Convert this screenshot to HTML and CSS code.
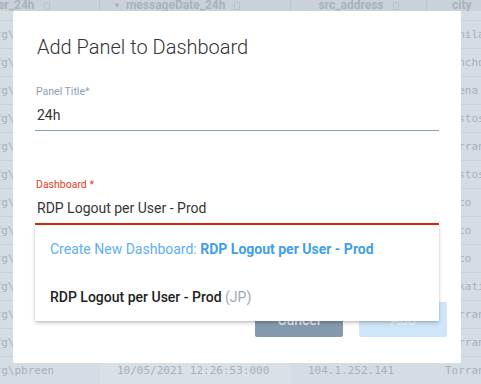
FILE: index.html
```html
<!DOCTYPE html>
<html>
<head>
    <link rel="stylesheet" href="styles.css">
    <meta name="viewport" content="width=device-width, initial-scale=1.0">
    <title>Add Panel</title>
</head>
<body>
    <div class="grid">
        <div class="grid-head">
            <div class="hcell c1"><span class="cut">user_24h</span><span class="clip"></span></div>
            <div class="hcell c2"><span class="sort">&#9660;</span>messageDate_24h<span class="clip"></span></div>
            <div class="hcell c3 center">src_address<span class="clip"></span></div>
            <div class="hcell c4">city<span class="clip"></span></div>
        </div>
        <div class="grid-gap"></div>
        <div class="row"><div class="cell c1"><span class="cut">org\pbreen</span></div><div class="cell c2">10/05/2021 12:31:02:000</div><div class="cell c3">104.1.252.141</div><div class="cell c4">Manila</div></div>
        <div class="row"><div class="cell c1"><span class="cut">org\pbreen</span></div><div class="cell c2">10/05/2021 12:30:47:000</div><div class="cell c3">104.1.252.141</div><div class="cell c4">Rancho</div></div>
        <div class="row"><div class="cell c1"><span class="cut">org\pbreen</span></div><div class="cell c2">10/05/2021 12:30:11:000</div><div class="cell c3">104.1.252.141</div><div class="cell c4">Arena</div></div>
        <div class="row"><div class="cell c1"><span class="cut">org\pbreen</span></div><div class="cell c2">10/05/2021 12:29:58:000</div><div class="cell c3">104.1.252.141</div><div class="cell c4">Pastos</div></div>
        <div class="row"><div class="cell c1"><span class="cut">org\pbreen</span></div><div class="cell c2">10/05/2021 12:29:40:000</div><div class="cell c3">104.1.252.141</div><div class="cell c4">Torrance</div></div>
        <div class="row"><div class="cell c1"><span class="cut">org\pbreen</span></div><div class="cell c2">10/05/2021 12:29:12:000</div><div class="cell c3">104.1.252.141</div><div class="cell c4">Pastos</div></div>
        <div class="row"><div class="cell c1"><span class="cut">org\pbreen</span></div><div class="cell c2">10/05/2021 12:28:50:000</div><div class="cell c3">104.1.252.141</div><div class="cell c4">Waco</div></div>
        <div class="row"><div class="cell c1"><span class="cut">org\pbreen</span></div><div class="cell c2">10/05/2021 12:28:31:000</div><div class="cell c3">104.1.252.141</div><div class="cell c4">Waco</div></div>
        <div class="row"><div class="cell c1"><span class="cut">org\pbreen</span></div><div class="cell c2">10/05/2021 12:28:05:000</div><div class="cell c3">104.1.252.141</div><div class="cell c4">Waco</div></div>
        <div class="row"><div class="cell c1"><span class="cut">org\pbreen</span></div><div class="cell c2">10/05/2021 12:27:44:000</div><div class="cell c3">104.1.252.141</div><div class="cell c4">Makati</div></div>
        <div class="row"><div class="cell c1"><span class="cut">org\pbreen</span></div><div class="cell c2">10/05/2021 12:27:20:000</div><div class="cell c3">104.1.252.141</div><div class="cell c4">Torrance</div></div>
        <div class="row"><div class="cell c1"><span class="cut">org\pbreen</span></div><div class="cell c2">10/05/2021 12:27:02:000</div><div class="cell c3">104.1.252.141</div><div class="cell c4">Torrance</div></div>
        <div class="row"><div class="cell c1"><span class="cut">org\pbreen</span></div><div class="cell c2">10/05/2021 12:26:53:000</div><div class="cell c3">104.1.252.141</div><div class="cell c4">Torrance</div></div>
    </div>

    <div class="dialog">
        <h2 class="dialog-title">Add Panel to Dashboard</h2>
        <div class="field">
            <label class="field-label">Panel Title<span class="req">*</span></label>
            <div class="field-input">24h</div>
        </div>
        <div class="field field-error">
            <label class="field-label">Dashboard <span class="req">*</span></label>
            <div class="field-input">RDP Logout per User - Prod</div>
        </div>
        <div class="actions">
            <button class="btn btn-cancel">Cancel</button>
            <button class="btn btn-add">Add</button>
        </div>
    </div>

    <div class="menu">
        <div class="menu-item create">Create New Dashboard: <b>RDP Logout per User - Prod</b></div>
        <div class="menu-item"><span class="name">RDP Logout per User - Prod</span> <span class="owner">(JP)</span></div>
    </div>
</body>
</html>
```

FILE: styles.css
```css
body{
    margin: 0;
    width: 481px;
    height: 384px;
    overflow: hidden;
    background: #d5dde4;
    font-family: Roboto, "Liberation Sans", sans-serif;
}

/* background grid, already dimmed by the backdrop */
.grid{
    width: 481px;
}
.grid-head{
    display: flex;
    height: 11px;
    background: #c9d2da;
    overflow: hidden;
}
.hcell{
    display: flex;
    align-items: center;
    height: 11px;
    line-height: 11px;
    font-size: 12px;
    font-weight: bold;
    color: #a7b2bd;
    border-right: 1px solid #bcc6cf;
    box-sizing: border-box;
    white-space: nowrap;
    overflow: hidden;
}
.hcell.center{
    justify-content: center;
}
.hcell .cut{
    margin-left: -15px;
}
.sort{
    font-size: 8px;
    margin: 0 5px 0 13px;
}
.clip{
    display: inline-block;
    width: 6px;
    height: 8px;
    margin-left: 9px;
    border: 1px solid #b9c3cc;
    border-radius: 1px;
    box-sizing: border-box;
}
.c1{ width: 100px; }
.c2{ width: 191px; }
.c3{ width: 136px; }
.c4{ width: 54px; border-right: none; }
.hcell.c4{ padding-left: 25px; }

.grid-gap{
    height: 9px;
    border-bottom: 1px solid #c9d2da;
}
.row{
    display: flex;
    height: 28px;
    border-bottom: 1px solid #c9d2da;
    box-sizing: border-box;
}
.cell{
    line-height: 28px;
    font-family: "DejaVu Sans Mono", monospace;
    font-size: 11px;
    color: #a6b1bb;
    white-space: nowrap;
    overflow: hidden;
    box-sizing: border-box;
}
.cell .cut{
    margin-left: -12px;
}
.cell.c2{
    padding-left: 17px;
    background: #d9e0e6;
}
.cell.c3{
    padding-left: 17px;
}
.cell.c4{
    padding-left: 18px;
}

/* dialog */
.dialog{
    position: absolute;
    left: 13px;
    top: 11px;
    width: 448px;
    box-sizing: border-box;
    padding: 24px 14px 26px 22px;
    background: #fff;
    border-radius: 2px;
}
.dialog-title{
    margin: 0 0 26px 2px;
    font-size: 20px;
    line-height: 24px;
    font-weight: 300;
    color: #333;
}
.field{
    margin-right: 8px;
}
.field + .field{
    margin-top: 47px;
}
.field-label{
    display: block;
    font-size: 10.5px;
    line-height: 13px;
    color: #8a9fb5;
    padding-left: 1px;
}
.field-input{
    padding: 7px 0 5px 2px;
    font-size: 14px;
    line-height: 20px;
    color: #363636;
    border-bottom: 1px solid #8aa1b6;
}
.field-error .field-label{
    color: #e2401c;
}
.field-error .field-input{
    border-bottom: 2px solid #d8290b;
}
.actions{
    display: flex;
    justify-content: flex-end;
    gap: 16px;
    margin-top: 77px;
}
.btn{
    width: 88px;
    height: 35px;
    border: none;
    border-radius: 2px;
    font-family: Roboto, "Liberation Sans", sans-serif;
    font-size: 14px;
    font-weight: 500;
    color: #fff;
}
.btn-cancel{
    background: #8599ae;
    color: #e6ebf0;
}
.btn-add{
    background: #cfe6f8;
    color: #eef6fc;
}

/* autocomplete menu, lies over the dialog */
.menu{
    position: absolute;
    left: 35px;
    top: 225px;
    width: 404px;
    background: #fff;
    box-shadow: 0 2px 4px rgba(0, 0, 0, 0.18), 0 1px 2px rgba(0, 0, 0, 0.1);
}
.menu-item{
    height: 48px;
    line-height: 48px;
    padding: 0 15px;
    font-size: 14px;
    white-space: nowrap;
}
.menu-item.create{
    color: #5eaff2;
}
.menu-item.create b{
    color: #3f9fea;
    font-weight: 700;
}
.menu-item .name{
    color: #222;
    font-weight: 500;
}
.menu-item .owner{
    color: #9aa9b8;
}
```
